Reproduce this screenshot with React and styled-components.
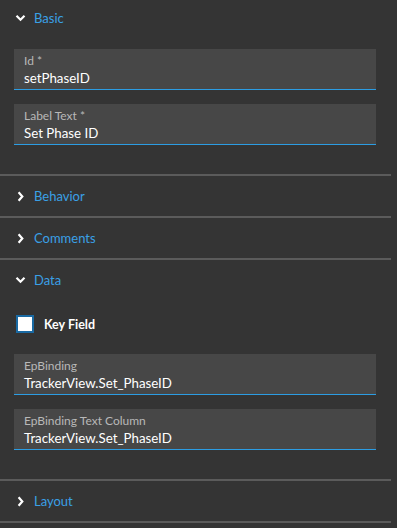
import { useState } from "react";
import styled, { createGlobalStyle } from "styled-components";

const Global = createGlobalStyle`
  html, body {
    margin: 0;
    padding: 0;
    background: #343434;
  }
  body {
    font-family: Lato, "Liberation Sans", sans-serif;
    overflow: hidden;
  }
`;

const Panel = styled.div`
  width: 391px;
  height: 528px;
  background: #343434;
  overflow: hidden;
`;

const Section = styled.section`
  border-bottom: 2px solid #5b5b5b;
  &:first-child > div:first-child {
    margin-top: -2px;
  }
`;

const Header = styled.div`
  height: 40px;
  display: flex;
  align-items: center;
  padding-left: 15px;
  cursor: pointer;
`;

const Chevron = styled.span`
  width: 11px;
  height: 12px;
  margin-right: 8px;
  display: flex;
  align-items: center;
  justify-content: center;
`;

const Title = styled.span`
  color: #3aa0e6;
  font-size: 13px;
`;

const Body = styled.div`
  padding: 11px 15px 29px 14px;
  display: flex;
  flex-direction: column;
  gap: 14px;
`;

const Field = styled.div`
  height: 41px;
  box-sizing: border-box;
  background: #474747;
  border-bottom: 1px solid #2c9de3;
  padding: 5px 10px 0;
  display: flex;
  flex-direction: column;
`;

const Label = styled.span`
  color: #b8b8b8;
  font-size: 12px;
  line-height: 14px;
`;

const Value = styled.span`
  color: #ffffff;
  font-size: 13.3px;
  line-height: 18px;
  margin-top: 1px;
`;

const CheckRow = styled.label`
  display: flex;
  align-items: center;
  gap: 10px;
  padding: 4px 0 7px 2px;
  cursor: pointer;
`;

const Box = styled.span`
  width: 14px;
  height: 14px;
  border: 2px solid #1a6aa3;
  background: ${p => (p.checked ? "#2c9de3" : "#ffffff")};
  display: inline-block;
`;

const CheckText = styled.span`
  color: #ffffff;
  font-size: 12.5px;
  font-weight: 700;
`;

const ChevronIcon = ({ open }) => (
  <Chevron>
    {open ? (
      <svg width="11" height="8" viewBox="0 0 11 8">
        <path d="M1.5 1.8 L5.5 5.8 L9.5 1.8" fill="none" stroke="#fff" strokeWidth="2.2" />
      </svg>
    ) : (
      <svg width="7" height="11" viewBox="0 0 7 11">
        <path d="M1.6 1.3 L5.3 5.5 L1.6 9.7" fill="none" stroke="#fff" strokeWidth="2.2" />
      </svg>
    )}
  </Chevron>
);

const sections = [
  {
    title: "Basic",
    open: true,
    fields: [
      { label: "Id *", value: "setPhaseID" },
      { label: "Label Text *", value: "Set Phase ID" },
    ],
  },
  { title: "Behavior" },
  { title: "Comments" },
  {
    title: "Data",
    open: true,
    checkbox: "Key Field",
    fields: [
      { label: "EpBinding", value: "TrackerView.Set_PhaseID" },
      { label: "EpBinding Text Column", value: "TrackerView.Set_PhaseID" },
    ],
  },
  { title: "Layout" },
];

const App = () => {
  const [keyField, setKeyField] = useState(false);

  return (
    <Panel>
      <Global />
      {sections.map(s => (
        <Section key={s.title}>
          <Header>
            <ChevronIcon open={s.open} />
            <Title>{s.title}</Title>
          </Header>
          {s.open && (
            <Body>
              {s.checkbox && (
                <CheckRow onClick={() => setKeyField(!keyField)}>
                  <Box checked={keyField} />
                  <CheckText>{s.checkbox}</CheckText>
                </CheckRow>
              )}
              {s.fields.map(f => (
                <Field key={f.label}>
                  <Label>{f.label}</Label>
                  <Value>{f.value}</Value>
                </Field>
              ))}
            </Body>
          )}
        </Section>
      ))}
    </Panel>
  );
};

export default App;
